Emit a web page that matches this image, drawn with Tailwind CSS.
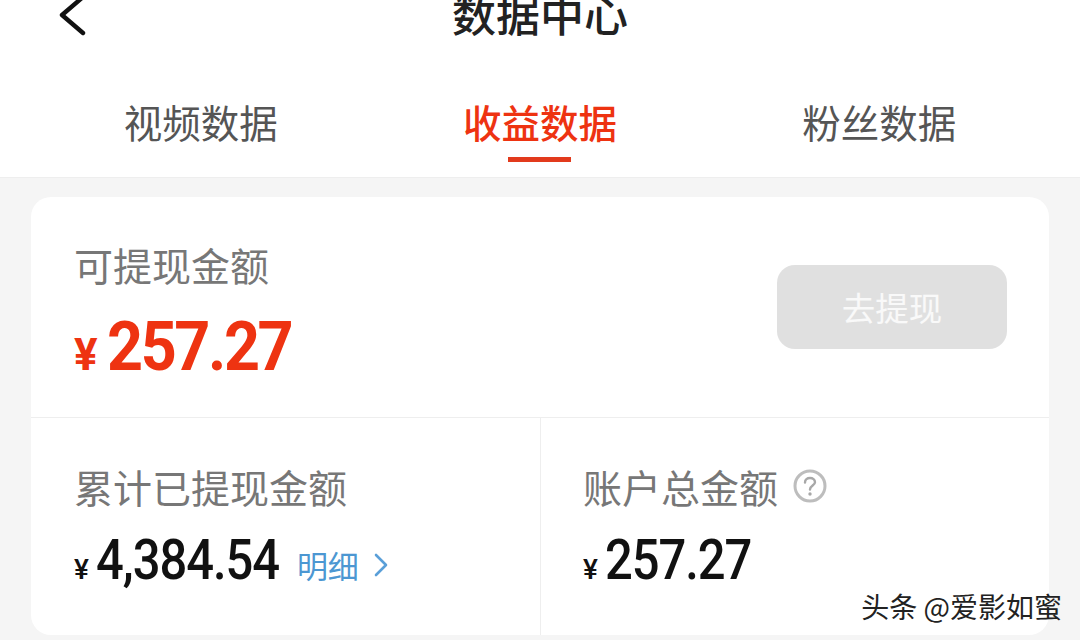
<!DOCTYPE html>
<html lang="zh">
<head>
    <meta charset="UTF-8">
    <title>数据中心</title>
    <script src="https://cdn.jsdelivr.net/npm/@tailwindcss/browser@4"></script>
</head>
<body class="w-[1080px] h-[640px] overflow-hidden bg-[#f5f5f5] font-['Noto_Sans_CJK_SC','Noto_Sans',sans-serif]">
    <!-- Header -->
    <header class="h-[178px] bg-white border-b border-[#eeeeee] overflow-hidden">
        <div class="relative h-[38px] flex justify-center items-center -mt-[6px]">
            <svg class="absolute left-[58px] top-[0px] w-[28px] h-[44px]" viewBox="0 0 28 44" fill="none" stroke="#111" stroke-width="4.4" stroke-linecap="round" stroke-linejoin="round">
                <path d="M25 3 L4 21 L25 39"></path>
            </svg>
            <h1 class="text-[44px] leading-[38px] font-medium text-[#222]">数据中心</h1>
        </div>
        <!-- Tabs -->
        <nav class="grid grid-cols-3 mt-[64px] px-[31px]">
            <a class="text-center text-[38.5px] leading-[50px] text-[#555]">视频数据</a>
            <a class="flex flex-col items-center text-[38.5px] leading-[50px] font-medium text-[#ee3311]">
                收益数据
                <span class="block w-[63px] h-[5px] mt-[11px] bg-[#e23a1c]"></span>
            </a>
            <a class="text-center text-[38.5px] leading-[50px] text-[#555]">粉丝数据</a>
        </nav>
    </header>

    <!-- Earnings card -->
    <main class="mx-[31px] mt-[19px] h-[438px] bg-white rounded-[20px] flex flex-col">
        <section class="h-[221px] shrink-0 border-b border-[#eeeeee] flex items-start justify-between pl-[43px] pr-[42px]">
            <div class="pt-[44px]">
                <p class="text-[39px] leading-[46px] text-[#777]">可提现金额</p>
                <p class="flex items-baseline mt-[30px] text-[#ee3311] font-['Roboto',sans-serif] font-bold">
                    <span class="text-[44px] leading-[60px] mr-[9px]">¥</span>
                    <span class="block w-[184px] origin-left scale-x-[0.925] text-[68px] leading-[60px] tracking-[-2.6px]">257.27</span>
                </p>
            </div>
            <button class="w-[230px] h-[84px] mt-[68px] rounded-[18px] bg-[#e0e0e0] text-white/80 text-[33.5px]">去提现</button>
        </section>
        <section class="flex-1 grid grid-cols-2">
            <div class="pl-[43px] pt-[45px]">
                <p class="text-[39px] leading-[46px] text-[#777]">累计已提现金额</p>
                <p class="flex items-baseline mt-[21px] font-['Roboto',sans-serif] font-medium text-[#111]">
                    <span class="text-[28px] leading-[60px] mr-[7px]">¥</span>
                    <span class="block w-[183px] origin-left scale-x-[0.89] text-[55px] leading-[60px] tracking-[-1.2px]">4,384.54</span>
                    <a class="flex items-center self-center ml-[18px] text-[31px] font-['Noto_Sans_CJK_SC',sans-serif] font-normal text-[#4c97d2]">
                        明细
                        <svg class="ml-[15px] w-[14px] h-[24px]" viewBox="0 0 14 24" fill="none" stroke="#5a9fd8" stroke-width="2.6" stroke-linecap="round" stroke-linejoin="round"><path d="M2 2 L12 12 L2 22"></path></svg>
                    </a>
                </p>
            </div>
            <div class="relative border-l border-[#eeeeee] pl-[42px] pt-[45px]">
                <p class="flex items-center text-[39px] leading-[46px] text-[#777]">
                    账户总金额
                    <svg class="ml-[15px] w-[34px] h-[34px]" viewBox="0 0 34 34" fill="none">
                        <circle cx="17" cy="17" r="15" stroke="#bdbdbd" stroke-width="3"></circle>
                        <path d="M12 13.5 C12 10.5 14.2 9 17 9 C19.8 9 22 10.8 22 13.2 C22 16.5 17 16.6 17 20.5" stroke="#a8a8a8" stroke-width="2.4" stroke-linecap="round"></path>
                        <circle cx="17" cy="25" r="1.7" fill="#a8a8a8"></circle>
                    </svg>
                </p>
                <p class="flex items-baseline mt-[21px] font-['Roboto',sans-serif] font-medium text-[#111]">
                    <span class="text-[28px] leading-[60px] mr-[7px]">¥</span>
                    <span class="block w-[144px] origin-left scale-x-[0.89] text-[55px] leading-[60px] tracking-[-1.2px]">257.27</span>
                </p>
                <!-- Watermark -->
                <span class="absolute right-[-13px] bottom-[13px] text-[28px] leading-[32px] text-[#222]">头条 @爱影如蜜</span>
            </div>
        </section>
    </main>
</body>
</html>
